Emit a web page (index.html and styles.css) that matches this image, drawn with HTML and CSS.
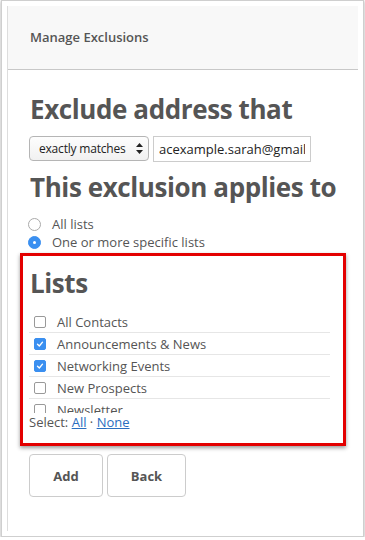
FILE: index.html
```html
<!DOCTYPE html>
<html lang="en">
<head>
  <meta charset="UTF-8" />
  <meta name="viewport" content="width=device-width, initial-scale=1" />
  <title>Manage Exclusions</title>
  <link rel="stylesheet" href="styles.css">
</head>
<body>

<div class="window">
  <div class="panel">
    <header>Manage Exclusions</header>

    <div class="content">
      <h2>Exclude address that</h2>
      <div class="match-row">
        <label class="select-wrap">
          <select>
            <option>exactly matches</option>
            <option>contains</option>
          </select>
          <svg class="arrows" width="7" height="11" viewBox="0 0 7 11"><path d="M3.5 0 L7 4 L0 4 Z M3.5 11 L7 7 L0 7 Z" fill="#222"/></svg>
        </label>
        <input type="text" class="address" value="acexample.sarah@gmail.com" />
      </div>

      <h2>This exclusion applies to</h2>
      <div class="radios">
        <label class="radio-row"><span class="radio"></span>All lists</label>
        <label class="radio-row"><span class="radio on"></span>One or more specific lists</label>
      </div>

      <!-- highlighted section -->
      <div class="lists-box">
        <h2>Lists</h2>
        <ul class="lists">
          <li><span class="check"></span>All Contacts</li>
          <li><span class="check on"><svg width="12" height="12" viewBox="0 0 12 12"><path d="M3 6.2 L5.2 8.4 L9 3.8" fill="none" stroke="#fff" stroke-width="1.6" stroke-linecap="round" stroke-linejoin="round"/></svg></span>Announcements &amp; News</li>
          <li><span class="check on"><svg width="12" height="12" viewBox="0 0 12 12"><path d="M3 6.2 L5.2 8.4 L9 3.8" fill="none" stroke="#fff" stroke-width="1.6" stroke-linecap="round" stroke-linejoin="round"/></svg></span>Networking Events</li>
          <li><span class="check"></span>New Prospects</li>
          <li><span class="check"></span>Newsletter</li>
        </ul>
        <div class="select-links">Select: <a href="#">All</a> · <a href="#">None</a></div>
      </div>

      <div class="buttons">
        <button class="btn-add">Add</button>
        <button class="btn-back">Back</button>
      </div>
    </div>
  </div>
</div>

</body>
</html>
```

FILE: styles.css
```css
body {
  font-family: 'Open Sans', 'DejaVu Sans', sans-serif;
  margin: 0; padding: 0;
  background-color: #fff;
  color: #555;
}
.window {
  box-sizing: border-box;
  height: 537px;
  margin: 0 1px 0 1px;
  padding: 5px 5px 5px 5px;
  border: 1px solid #cfcfcf;
  box-shadow: 0 1px 3px rgba(0,0,0,0.35);
  background: #fff;
}
.panel {
  height: 100%;
  border-left: 1px solid #ddd;
}
header {
  height: 63px;
  background-color: #f8f8f8;
  border-bottom: 1px solid #c8c8c8;
  padding-left: 22px;
  font-size: 13px;
  font-weight: 600;
  line-height: 63px;
  color: #555;
}
.content {
  padding: 0 0 0 22px;
}
h2 {
  margin: 0;
  font-size: 26px;
  font-weight: 700;
  line-height: 34px;
  color: #555;
  letter-spacing: -0.4px;
  white-space: nowrap;
}
.content > h2:first-child {
  margin-top: 22px;
}
.match-row {
  display: flex;
  gap: 4px;
  margin: 10px 0 8px -1px;
}
.select-wrap {
  position: relative;
  display: block;
}
.select-wrap select {
  appearance: none;
  -webkit-appearance: none;
  width: 120px;
  height: 25px;
  margin: 0;
  padding: 0 0 0 9px;
  border: 1px solid #b5b5b5;
  border-radius: 4px;
  background: linear-gradient(#fdfdfd, #f1f1f1);
  font-family: inherit;
  font-size: 12px;
  letter-spacing: -0.2px;
  color: #222;
}
.arrows {
  position: absolute;
  right: 6px;
  top: 7px;
}
.address {
  box-sizing: border-box;
  width: 158px;
  height: 26px;
  margin: 0;
  padding: 0 5px;
  border: 1px solid #ccc;
  border-radius: 0;
  font-family: inherit;
  font-size: 13px;
  color: #222;
}
.radios {
  margin: 11px 0 2px -2px;
}
.radio-row {
  display: flex;
  align-items: center;
  height: 18px;
  font-size: 13px;
}
.radio {
  box-sizing: border-box;
  width: 13px;
  height: 13px;
  margin-right: 11px;
  border: 1px solid #aaa;
  border-radius: 50%;
  background: #fff;
  position: relative;
}
.radio.on {
  border-color: #3a8ff0;
  background: #3a8ff0;
}
.radio.on::after {
  content: '';
  position: absolute;
  left: 4px; top: 4px;
  width: 3px; height: 3px;
  border-radius: 50%;
  background: #fff;
}
.lists-box {
  margin: 0 12px 0 -10px;
  padding: 10px 13px 12px 7px;
  border: 3px solid #e30000;
  box-shadow: 0 2px 4px rgba(0,0,0,0.4);
}
.lists {
  list-style: none;
  margin: 11px 0 0 -1px;
  padding: 0;
  height: 102px;
  overflow: hidden;
}
.lists li {
  display: flex;
  align-items: center;
  height: 21px;
  border-bottom: 1px solid #e6e6e6;
  font-size: 13px;
  color: #555;
}
.check {
  box-sizing: border-box;
  display: flex;
  align-items: center;
  justify-content: center;
  width: 12px;
  height: 12px;
  margin: 0 11px 0 5px;
  border: 1px solid #999;
  border-radius: 2px;
  background: #fff;
}
.check.on {
  border-color: #3a8ff0;
  background: #3a8ff0;
}
.select-links {
  margin-left: -1px;
  font-size: 13px;
  line-height: 18px;
  color: #555;
}
.select-links a {
  color: #2a6ebf;
}
.buttons {
  display: flex;
  gap: 4px;
  margin: 8px 0 0 -1px;
}
button {
  height: 43px;
  background-color: #fff;
  color: #555;
  border: 1px solid #ccc;
  border-radius: 4px;
  font-family: inherit;
  font-size: 13px;
  font-weight: 700;
  cursor: pointer;
}
.btn-add {
  width: 74px;
}
.btn-back {
  width: 79px;
}
```
